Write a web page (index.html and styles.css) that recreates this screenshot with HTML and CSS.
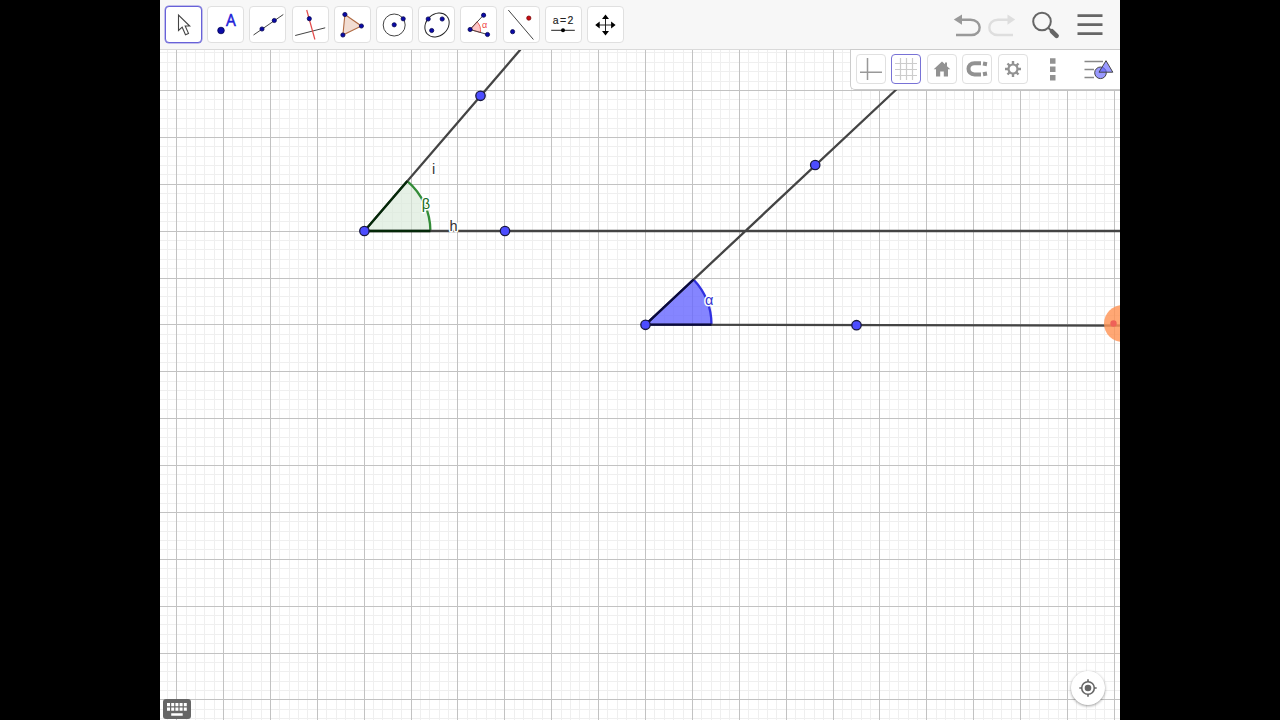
FILE: index.html
```html
<!DOCTYPE html>
<html lang="en">
<head>
<meta charset="utf-8">
<title>Geometry</title>
<link rel="stylesheet" href="styles.css">
</head>
<body>
<main class="app">
  <header class="toolbar">
    <div class="tools">
      <button class="tool selected" aria-label="Move"><svg viewBox="-18 -18 36 36"><path class="cursor" d="M-5.500-10V5.500L-1.800 2.200 1.500 9.700 4.500 8.400 1.200 1H5.700Z"/></svg></button>
      <button class="tool" aria-label="Point"><svg viewBox="-18 -18 36 36"><circle class="pt" cx="-5" cy="5.500" r="3.300"/><text class="a" x="4.900" y="0.500">A</text></svg></button>
      <button class="tool" aria-label="Line"><svg viewBox="-18 -18 36 36"><path class="thin" d="M-14.500 10 15.300-10.500"/><circle class="pt" cx="-6" cy="4" r="2.100"/><circle class="pt" cx="6.300" cy="-4.500" r="2.100"/></svg></button>
      <button class="tool" aria-label="Perpendicular line"><svg viewBox="-18 -18 36 36"><path class="thin" d="M-14.800 10.500 15.200 2.800"/><path class="red-line" d="M-3.300-15 4.900 14.500"/><circle class="pt" cx="-.7" cy="-6.300" r="2.100"/></svg></button>
      <button class="tool" aria-label="Polygon"><svg viewBox="-18 -18 36 36"><path class="tri" d="M-7.100-10.500 9.400 1-9.100 10Z"/><circle class="pt" cx="-7.100" cy="-10.500" r="2.100"/><circle class="pt" cx="9.400" cy="1" r="2.100"/><circle class="pt" cx="-9.100" cy="10" r="2.100"/></svg></button>
      <button class="tool" aria-label="Circle"><svg viewBox="-18 -18 36 36"><circle class="thin" cx=".2" r="11"/><circle class="pt" cx=".2" cy="-.2" r="2.100"/><circle class="pt" cx="9.200" cy="-6.200" r="2.100"/></svg></button>
      <button class="tool" aria-label="Ellipse"><svg viewBox="-18 -18 36 36"><ellipse class="thin dark" rx="13.200" ry="10.800" transform="rotate(-43)"/><circle class="pt" cx="-8.800" cy="-6" r="2.100"/><circle class="pt" cx="5.200" cy="-6" r="2.100"/><circle class="pt" cx="-5.300" cy="5.500" r="2.100"/></svg></button>
      <button class="tool" aria-label="Angle"><svg viewBox="-18 -18 36 36"><path class="wedge" d="M-8.900 4.500-2-3.300Q2.200 1 1.500 7.500Z"/><path class="thin" d="M4.600-10-8.900 4.500 8.500 9.500"/><text class="alpha" x="5.600" y="2.600">α</text><circle class="pt" cx="-8.900" cy="4.500" r="2.100"/><circle class="pt" cx="4.600" cy="-9.800" r="2.100"/><circle class="pt" cx="8.500" cy="9.500" r="2.100"/></svg></button>
      <button class="tool" aria-label="Reflect"><svg viewBox="-18 -18 36 36"><path class="thin" d="M-12.700-15 12.400 14.500"/><circle class="pt redpt" cx="7.800" cy="-6.900" r="2.100"/><circle class="pt" cx="-8.400" cy="6.700" r="2.100"/></svg></button>
      <button class="tool" aria-label="Slider"><svg viewBox="-18 -18 36 36"><text class="eq" x="0" y="-.8" textLength="20.500">a=2</text><path class="thin dark" d="M-11.800 5.300H11.800"/><circle cy="5.300" r="2"/></svg></button>
      <button class="tool" aria-label="Move view"><svg viewBox="-18 -18 36 36"><path class="thin dark" d="M-7 0H8M.5-7V7"/><path d="M.5-10.500 4-6H-3ZM.5 10.500 4 6H-3ZM-9.800 0-5.300-3.500V3.500ZM10.600 0 6.100-3.500V3.500Z"/></svg></button>
    </div>
    <svg class="actions" viewBox="945 0 165 49">
      <g class="undo"><path d="M960.500 19.800H970.500C982.500 19.800 982.500 35 971.500 35H956"/><path class="head" d="M953.800 19.500 962 14.500V24.700Z"/></g>
      <g class="redo"><path d="M1008 19.800H998C986.500 19.800 986.500 35 997.500 35H1013"/><path class="head" d="M1015.200 19.500 1007.500 14.500V24.700Z"/></g>
      <circle class="lens" cx="1042" cy="21.500" r="8.800"/>
      <path class="neck" d="M1048 27.500 1052 31.500"/><path class="handle" d="M1052 31.300 1056.600 35.800"/>
      <path class="menu" d="M1077.500 15.700H1102.500M1077.500 24.700H1102.500M1077.500 33.700H1102.500"/>
    </svg>
  </header>

  <section class="workspace">
    <svg class="drawing" viewBox="160 50 960 670">
      <g id="grid"></g>
      <path class="beta" d="M364.400 231 407.300 181.100A66 66 0 0 1 430.400 231Z"/>
      <path class="beta-arc" d="M407.300 181.100A66 66 0 0 1 430.400 231"/>
      <path class="alpha-fill" d="M645.500 324.700 693.500 279.500A66 66 0 0 1 711.500 324.700Z"/>
      <path class="alpha-arc" d="M693.500 279.500A66 66 0 0 1 711.500 324.700"/>
      <path class="ray" d="M520.500 49.500 364.400 231H1120M900 86 645.500 324.700 1120 325.600"/>
      <path class="beta-edge" d="M407.300 181.100 364.400 231H430.400"/>
      <path class="alpha-edge" d="M693.500 279.500 645.500 324.700H711.500"/>
      <g class="points"><circle cx="364.400" cy="231" r="4.700"/><circle cx="505" cy="231" r="4.700"/><circle cx="480.500" cy="95.800" r="4.700"/><circle cx="645.500" cy="324.800" r="4.700"/><circle cx="856.500" cy="325.200" r="4.700"/><circle cx="815.200" cy="165" r="4.700"/></g>
      <g class="labels"><text x="432" y="174">i</text><text x="449.500" y="230.500">h</text><text class="green" x="421.800" y="208.500">β</text><text class="blue" x="705" y="305">α</text></g>
      <circle class="touch" cx="1122.500" cy="323.500" r="18.500"/><circle class="touch-dot" cx="1113.500" cy="323.500" r="3.200"/>
    </svg>

    <div class="stylebar">
      <button class="option" aria-label="Axes"><svg viewBox="-15 -15 30 30"><path class="axes" d="M-11 3.300H11M-3.500-11V11"/></svg></button>
      <button class="option selected" aria-label="Grid"><svg viewBox="-15 -15 30 30"><path class="gridicon" d="M-11-5.500H11M-11 .5H11M-11 6.500H11M-5.500-11V11M.5-11V11M6.500-11V11"/></svg></button>
      <button class="option" aria-label="Home"><svg viewBox="-15 -15 30 30"><path class="gray" d="M0-7.500-8.300.3H-6V7.500H-1.800V2.500H1.800V7.500H6V.3H8.300L5-2.800V-6.500H3V-4.700Z"/></svg></button>
      <button class="option" aria-label="Snap"><svg viewBox="-15 -15 30 30"><path class="magnet" d="M4-5.800H-2.500C-10.500-5.800-10.500 5.500-2.500 5.500H4"/><path class="magnet" d="M6-5.500 10-4.800M6 5.200 10 4.500"/></svg></button>
      <button class="option" aria-label="Settings"><svg viewBox="-15 -15 30 30"><circle class="gear" r="4.500"/><path class="teeth" d="M0-5V-8M0 5V8M-5 0H-8M5 0H8M-3.500-3.500-5.500-5.500M3.500 3.500 5.500 5.500M-3.500 3.500-5.500 5.500M3.500-3.500 5.500-5.500"/></svg></button>
      <svg class="extras" viewBox="1040 54 75 30">
        <path class="gray" d="M1051 58.300h5.500v5.500h-5.500zM1051 66.600h5.500v5.500h-5.500zM1051 74.900h5.500v5.500h-5.500z"/>
        <path class="listicon" d="M1085.500 61.500H1104M1085.500 69.500H1095M1085.500 77.500H1095"/>
        <circle class="shape" cx="1101.500" cy="72.800" r="5.800"/><path class="shape" d="M1107 60.700 1113.800 72.200H1100Z"/>
      </svg>
    </div>

    <button class="keyboard" aria-label="Keyboard"><svg viewBox="0 0 28 20"><path d="M4 4h3v3.200H4zM8.200 4h3v3.200h-3zM12.400 4h3v3.200h-3zM16.600 4h3v3.200h-3zM20.800 4h3v3.200h-3zM4 8.500h3v3.200H4zM8.200 8.500h3v3.200h-3zM12.400 8.500h3v3.200h-3zM16.600 8.500h3v3.200h-3zM20.800 8.500h3v3.200h-3zM8.200 14.200h11.500v2.600H8.200z"/></svg></button>
    <button class="locate" aria-label="Standard view"><svg viewBox="-17 -17 34 34"><circle class="ring" r="6.300"/><circle class="core" r="3.300"/><path class="ring" d="M0-6V-8.700M0 6V8.700M-6 0H-8.700M6 0H8.700"/></svg></button>
  </section>
</main>
<script src="grid.js"></script>
</body>
</html>
```

FILE: styles.css
```css
* { box-sizing: border-box; }
body { margin: 0; background: #000; font-family: "Liberation Sans", Arial, sans-serif; overflow: hidden; }
button { padding: 0; font: inherit; }
svg { display: block; }
.app { width: 960px; height: 720px; margin: 0 auto; display: flex; flex-direction: column; background: #fff; overflow: hidden; }
.toolbar { height: 50px; flex: none; display: flex; justify-content: space-between; background: #f7f7f7; border-bottom: 1px solid #dadada; padding: 0 10px 0 5px; }
.tools { display: flex; gap: 5.200px; padding-top: 6px; }
.tool { width: 37px; height: 37px; background: #fff; border: 1px solid #e0e0e0; border-radius: 4px; display: flex; align-items: center; justify-content: center; }
.tool svg { width: 36px; height: 36px; flex: none; }
.tool.selected { border: 1.500px solid #6761d8; box-shadow: 0 0 0 .5px #8984df; }
.actions { width: 165px; height: 49px; }

.cursor { fill: #fff; stroke: #444; stroke-width: 1.100; }
.pt { fill: #0a0aa8; stroke: #050550; stroke-width: .8; }
.redpt { fill: #c80c14; stroke: #700; }
.thin { fill: none; stroke: #444; stroke-width: 1; }
.dark { stroke: #222; }
.red-line { stroke: #e24a4a; stroke-width: 1.200; }
.tri { fill: #f2ddd2; stroke: #b06a42; stroke-width: 1.100; }
.wedge { fill: #ffc6c6; stroke: #e66; stroke-width: 1; }
.a { font-size: 15.500px; fill: #2020d8; stroke: #2020d8; stroke-width: .5; text-anchor: middle; font-family: "Open Sans", sans-serif; }
.alpha { font-size: 9px; fill: #e44; text-anchor: middle; }
.eq { font-size: 10.500px; fill: #222; stroke: #222; stroke-width: .15; text-anchor: middle; }

.undo, .redo { fill: none; stroke: #999; stroke-width: 2.400; }
.redo { stroke: #dedede; }
.undo .head { fill: #999; stroke: none; }
.redo .head { fill: #dedede; stroke: none; }
.lens { fill: none; stroke: #666; stroke-width: 2; }
.neck { stroke: #666; stroke-width: 2; }
.handle { stroke: #666; stroke-width: 4.600; stroke-linecap: round; }
.menu { stroke: #666; stroke-width: 2.700; }

.workspace { position: relative; flex: 1; }
.drawing { width: 960px; height: 670px; }
.minor { stroke: #efefef; stroke-width: 1; }
.major { stroke: #c2c2c2; stroke-width: 1; }
.ray { fill: none; stroke: #444; stroke-width: 2.300; }
.beta { fill: #d8ead8; fill-opacity: .65; }
.beta-arc { fill: none; stroke: #338c38; stroke-width: 2.300; }
.beta-edge { fill: none; stroke: #042808; stroke-width: 2.300; }
.alpha-fill { fill: #6666ff; fill-opacity: .8; }
.alpha-arc { fill: none; stroke: #3030e0; stroke-width: 2.300; }
.alpha-edge { fill: none; stroke: #080840; stroke-width: 2.300; }
.points { fill: #4d4dff; stroke: #181840; stroke-width: 1.300; }
.labels { font-size: 14.500px; fill: #333; stroke: #fff; stroke-width: 3px; paint-order: stroke; stroke-linejoin: round; }
.labels .green { fill: #156b20; }
.labels .blue { fill: #3333d0; }
.touch { fill: #ff9455; fill-opacity: .82; }
.touch-dot { fill: #ef6158; }

.stylebar { position: absolute; top: -1px; right: 0; width: 270px; height: 41px; display: flex; align-items: center; gap: 5.500px; padding: 0 5px 1px 4.500px; background: #fff; border: 1px solid #ccc; border-right: 0; border-radius: 0 0 0 5px; }
.option { width: 30px; height: 30px; flex: none; background: #fff; border: 1px solid #e0e0e0; border-radius: 4px; display: flex; align-items: center; justify-content: center; }
.option.selected { border-color: #7872d6; }
.option svg { width: 30px; height: 30px; flex: none; }
.extras { width: 75px; height: 30px; flex: none; margin-left: 6px; }
.axes { stroke: #999; stroke-width: 1.500; }
.gridicon { stroke: #ccc; stroke-width: 1.200; }
.gray { fill: #929292; }
.magnet { fill: none; stroke: #929292; stroke-width: 4; }
.gear { fill: none; stroke: #929292; stroke-width: 2.200; }
.teeth { stroke: #929292; stroke-width: 2.400; }
.listicon { stroke: #888; stroke-width: 1.700; }
.shape { fill: #6464ff; fill-opacity: .65; stroke: #444; stroke-width: 1; }

.keyboard { position: absolute; left: 3px; bottom: 1px; width: 28px; height: 20px; border: 0; border-radius: 3px; background: #666; }
.keyboard path { fill: #fff; }
.locate { position: absolute; right: 15px; bottom: 15px; width: 34px; height: 34px; border: 0; border-radius: 50%; background: #fff; box-shadow: 0 1px 3px rgba(0,0,0,.4); }
.ring { fill: none; stroke: #666; stroke-width: 1.600; }
.core { fill: #666; }
```

FILE: grid.js
```js
const grid = document.getElementById("grid");
const step = 46.88 / 5;
let minor = "";
let major = "";
const snap = value => Math.floor(value) + 0.5;
for (let i = -1; i < 102; i++) {
  const x = snap(176.7 + i * step);
  const line = `M${x} 50V720`;
  if (i % 5 === 0) major += line; else minor += line;
}
for (let i = -4; i < 68; i++) {
  const y = snap(90.5 + i * step);
  const line = `M160 ${y}H1120`;
  if (i % 5 === 0) major += line; else minor += line;
}
grid.innerHTML = `<path class="minor" d="${minor}"/><path class="major" d="${major}"/>`;
```
